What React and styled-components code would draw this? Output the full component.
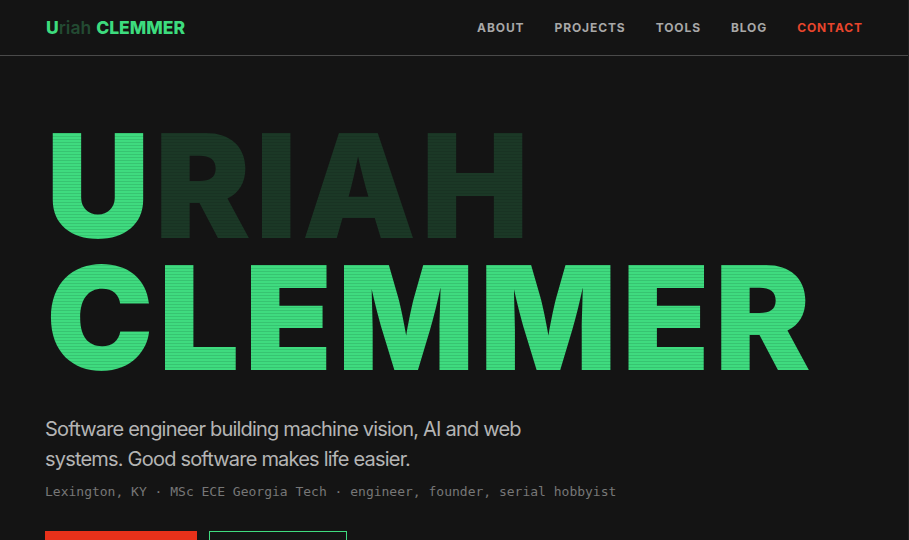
import React from "react";
import styled, { createGlobalStyle } from "styled-components";

const Global = createGlobalStyle`
  html, body { margin: 0; padding: 0; background: #141414; }
  body { font-family: Inter, "Noto Sans", sans-serif; color: #b8b8b8; }
  * { box-sizing: border-box; }
`;

const Page = styled.div`
  height: 540px;
  background: #141414;
  border-right: 1px solid #202020;
  overflow: hidden;
`;

const Header = styled.header`
  height: 56px;
  display: flex;
  align-items: center;
  justify-content: space-between;
  padding: 0 45px 0 46px;
  border-bottom: 1px solid #4a4a4a;
`;

const Logo = styled.div`
  font-family: Inter, sans-serif;
  font-size: 17.5px;
  letter-spacing: 0;
  display: flex;
  align-items: baseline;
`;

const LogoPart = styled.span`
  color: ${(p) => (p.$dim ? "#234a32" : "#3ddc7e")};
  font-weight: ${(p) => (p.$dim ? 600 : 800)};
  margin-right: ${(p) => (p.$space ? "5px" : "0")};
`;

const Nav = styled.nav`
  display: flex;
  gap: 30px;
`;

const NavLink = styled.a`
  font-family: Inter, sans-serif;
  font-weight: 700;
  font-size: 12px;
  letter-spacing: 0.075em;
  text-transform: uppercase;
  color: ${(p) => (p.$accent ? "#e8452c" : "#a8a8a8")};
  text-decoration: none;
`;

const Hero = styled.section`
  padding: 64px 45px 0 45px;
`;

const Title = styled.h1`
  margin: 0;
  font-family: Inter, sans-serif;
  font-weight: 900;
  font-size: 144px;
  line-height: 132px;
  letter-spacing: 0.032em;
  text-transform: uppercase;
  margin-left: 1px;
`;

const TitleLine = styled.div`
  display: block;
  white-space: nowrap;
`;

const Glyphs = styled.span`
  color: transparent;
  background-image: ${(p) =>
    p.$dim
      ? "repeating-linear-gradient(to bottom, #1b3826 0px, #1b3826 2px, #193323 2px, #193323 3px)"
      : "repeating-linear-gradient(to bottom, #3fdb7f 0px, #3fdb7f 2px, #37c471 2px, #37c471 3px)"};
  -webkit-background-clip: text;
  background-clip: text;
`;

const Lead = styled.p`
  margin: 30px 0 0 0;
  max-width: 490px;
  font-family: Inter, sans-serif;
  font-size: 20px;
  line-height: 30px;
  letter-spacing: -0.04em;
  color: #b4b4b4;
`;

const Meta = styled.p`
  margin: 10px 0 0 0;
  font-family: "DejaVu Sans Mono", monospace;
  font-size: 13px;
  color: #777777;
`;

const Actions = styled.div`
  display: flex;
  gap: 12px;
  margin-top: 32px;
`;

const Button = styled.a`
  display: inline-flex;
  align-items: center;
  justify-content: center;
  height: 44px;
  width: ${(p) => p.$w}px;
  background: ${(p) => (p.$primary ? "#e8311a" : "transparent")};
  border: 1px solid ${(p) => (p.$primary ? "#e8311a" : "#3fdb7f")};
  color: ${(p) => (p.$primary ? "#141414" : "#3fdb7f")};
  font-family: Inter, sans-serif;
  font-weight: 700;
  font-size: 12px;
  letter-spacing: 0.09em;
  text-transform: uppercase;
  text-decoration: none;
`;

export default function App() {
  return (
    <>
      <Global />
      <Page>
        <Header>
          <Logo>
            <LogoPart>U</LogoPart>
            <LogoPart $dim $space>riah</LogoPart>
            <LogoPart>CLEMMER</LogoPart>
          </Logo>
          <Nav>
            <NavLink href="#about">About</NavLink>
            <NavLink href="#projects">Projects</NavLink>
            <NavLink href="#tools">Tools</NavLink>
            <NavLink href="#blog">Blog</NavLink>
            <NavLink href="#contact" $accent>Contact</NavLink>
          </Nav>
        </Header>
        <Hero>
          <Title>
            <TitleLine>
              <Glyphs>U</Glyphs>
              <Glyphs $dim>riah</Glyphs>
            </TitleLine>
            <TitleLine>
              <Glyphs>Clemmer</Glyphs>
            </TitleLine>
          </Title>
          <Lead>
            Software engineer building machine vision, AI and web systems. Good
            software makes life easier.
          </Lead>
          <Meta>
            Lexington, KY · MSc ECE Georgia Tech · engineer, founder, serial hobbyist
          </Meta>
          <Actions>
            <Button $primary $w={152} href="#projects">View Projects</Button>
            <Button $w={138} href="#contact">Get in touch</Button>
          </Actions>
        </Hero>
      </Page>
    </>
  );
}
